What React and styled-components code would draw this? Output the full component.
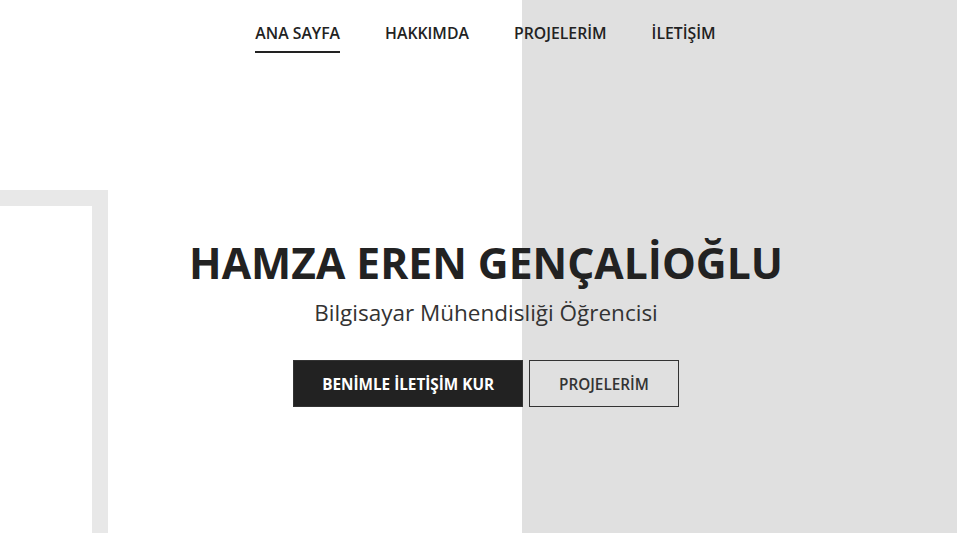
import React from "react";
import styled, { createGlobalStyle } from "styled-components";

const GlobalStyle = createGlobalStyle`
  html, body {
    margin: 0;
    padding: 0;
    height: 100%;
  }
  body {
    font-family: "Open Sans", "Noto Sans", sans-serif;
    color: #222;
    overflow: hidden;
  }
`;

const navItems = ["ANA SAYFA", "HAKKIMDA", "PROJELERİM", "İLETİŞİM"];

const App = () => {
  return (
    <>
      <GlobalStyle />
      <Page>
        <Frame />
        <Nav>
          {navItems.map((item, i) => (
            <NavLink key={item} $active={i === 0}>
              {item}
            </NavLink>
          ))}
        </Nav>
        <Hero>
          <Title>HAMZA EREN GENÇALİOĞLU</Title>
          <Subtitle>Bilgisayar Mühendisliği Öğrencisi</Subtitle>
          <Buttons>
            <Button $primary>BENİMLE İLETİŞİM KUR</Button>
            <Button>PROJELERİM</Button>
          </Buttons>
        </Hero>
      </Page>
    </>
  );
};

const Page = styled.div`
  position: relative;
  height: 533px;
  overflow: hidden;
  background: linear-gradient(to right, #ffffff 522px, #e0e0e0 522px);
`;

const Frame = styled.div`
  position: absolute;
  top: 190px;
  left: -200px;
  width: 276px;
  height: 420px;
  border: 16px solid #e8e8e8;
`;

const Nav = styled.nav`
  position: relative;
  display: flex;
  justify-content: center;
  gap: 45px;
  padding: 22px 0 0 14px;
`;

const NavLink = styled.a`
  font-size: 15.8px;
  line-height: 22px;
  font-weight: 600;
  color: #222;
  padding-bottom: 7px;
  border-bottom: 2px solid ${(p) => (p.$active ? "#222" : "transparent")};
  cursor: pointer;
`;

const Hero = styled.section`
  position: relative;
  display: flex;
  flex-direction: column;
  align-items: center;
  padding: 183px 0 0 15px;
`;

const Title = styled.h1`
  margin: 0;
  font-size: 42.6px;
  line-height: 53px;
  font-weight: 700;
  color: #222;
`;

const Subtitle = styled.p`
  margin: 8px 0 0;
  font-size: 22.5px;
  line-height: 32px;
  font-weight: 400;
  color: #333;
`;

const Buttons = styled.div`
  display: flex;
  gap: 6px;
  margin-top: 31px;
`;

const Button = styled.button`
  font-family: "Open Sans", "Noto Sans", sans-serif;
  font-size: 15.3px;
  font-weight: ${(p) => (p.$primary ? 700 : 600)};
  height: 47px;
  padding: 0 ${(p) => (p.$primary ? "28px" : "29px")};
  background: ${(p) => (p.$primary ? "#222" : "transparent")};
  color: ${(p) => (p.$primary ? "#fff" : "#333")};
  border: 1px solid #333;
  border-radius: 0;
  cursor: pointer;
`;

export default App;
